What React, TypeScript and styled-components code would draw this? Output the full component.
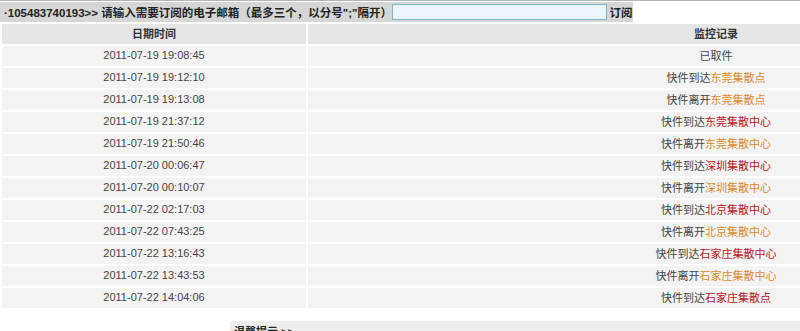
import React from "react";
import styled, { createGlobalStyle } from "styled-components";

interface Track {
  time: string;
  action: string;
  place?: string;
  tone?: "orange" | "red";
}

const tracks: Track[] = [
  { time: "2011-07-19 19:08:45", action: "已取件" },
  { time: "2011-07-19 19:12:10", action: "快件到达", place: "东莞集散点", tone: "orange" },
  { time: "2011-07-19 19:13:08", action: "快件离开", place: "东莞集散点", tone: "orange" },
  { time: "2011-07-19 21:37:12", action: "快件到达", place: "东莞集散中心", tone: "red" },
  { time: "2011-07-19 21:50:46", action: "快件离开", place: "东莞集散中心", tone: "orange" },
  { time: "2011-07-20 00:06:47", action: "快件到达", place: "深圳集散中心", tone: "red" },
  { time: "2011-07-20 00:10:07", action: "快件离开", place: "深圳集散中心", tone: "orange" },
  { time: "2011-07-22 02:17:03", action: "快件到达", place: "北京集散中心", tone: "red" },
  { time: "2011-07-22 07:43:25", action: "快件离开", place: "北京集散中心", tone: "orange" },
  { time: "2011-07-22 13:16:43", action: "快件到达", place: "石家庄集散中心", tone: "red" },
  { time: "2011-07-22 13:43:53", action: "快件离开", place: "石家庄集散中心", tone: "orange" },
  { time: "2011-07-22 14:04:06", action: "快件到达", place: "石家庄集散点", tone: "red" },
];

const GlobalStyle = createGlobalStyle`
  html, body {
    margin: 0;
    padding: 0;
    background: #fff;
    overflow: hidden;
    font-family: "Liberation Sans", Arial, "Noto Sans CJK SC", sans-serif;
    font-size: 11px;
    color: #444;
  }
`;

const Page = styled.div`
  width: 800px;
  overflow: hidden;
  border-top: 1px solid #b5b5b5;
`;

const TopBar = styled.div`
  display: flex;
  align-items: center;
  width: 629px;
  height: 20px;
  margin-top: 1px;
  padding-left: 4px;
  background: #d6d6d6;
  color: #222;
  font-size: 11.5px;
  font-weight: bold;
  white-space: nowrap;
`;

const EmailInput = styled.input`
  box-sizing: border-box;
  width: 219px;
  height: 16px;
  margin: 0 3px 0 auto;
  padding: 0 2px;
  border: 1px solid #7fb4c9;
  background: #eaf6fb;
  outline: none;
`;

const Subscribe = styled.span`
  width: 24px;
`;

const Table = styled.table`
  width: 1126px;
  border-collapse: separate;
  border-spacing: 2px;
  table-layout: fixed;
`;

const HeadCell = styled.th`
  height: 20px;
  padding: 0 0 2px;
  box-sizing: border-box;
  background: #e6e6e6;
  color: #333;
  font-weight: bold;
  text-align: center;
`;

const Cell = styled.td`
  height: 20px;
  padding: 0 0 2px;
  box-sizing: border-box;
  background: #f3f3f3;
  text-align: center;
  color: #444;
`;

const Place = styled.span<{ $tone: "orange" | "red" }>`
  color: ${(p) => (p.$tone === "red" ? "#b3161c" : "#d98a2c")};
`;

const Notice = styled.div`
  margin: 11px 0 0 230px;
  height: 20px;
  padding: 2px 0 0 4px;
  background: #eeeeee;
  color: #222;
  font-weight: bold;
`;

export default function App() {
  return (
    <>
      <GlobalStyle />
      <Page>
        <TopBar>
          ·105483740193&gt;&gt; 请输入需要订阅的电子邮箱（最多三个，以分号";"隔开）
          <EmailInput type="text" />
          <Subscribe>订阅</Subscribe>
        </TopBar>
        <Table>
          <colgroup>
            <col style={{ width: 304 }} />
            <col />
          </colgroup>
          <thead>
            <tr>
              <HeadCell>日期时间</HeadCell>
              <HeadCell>监控记录</HeadCell>
            </tr>
          </thead>
          <tbody>
            {tracks.map((t) => (
              <tr key={t.time}>
                <Cell>{t.time}</Cell>
                <Cell>
                  {t.action}
                  {t.place && t.tone && <Place $tone={t.tone}>{t.place}</Place>}
                </Cell>
              </tr>
            ))}
          </tbody>
        </Table>
        <Notice>温馨提示 &gt;&gt;</Notice>
      </Page>
    </>
  );
}
